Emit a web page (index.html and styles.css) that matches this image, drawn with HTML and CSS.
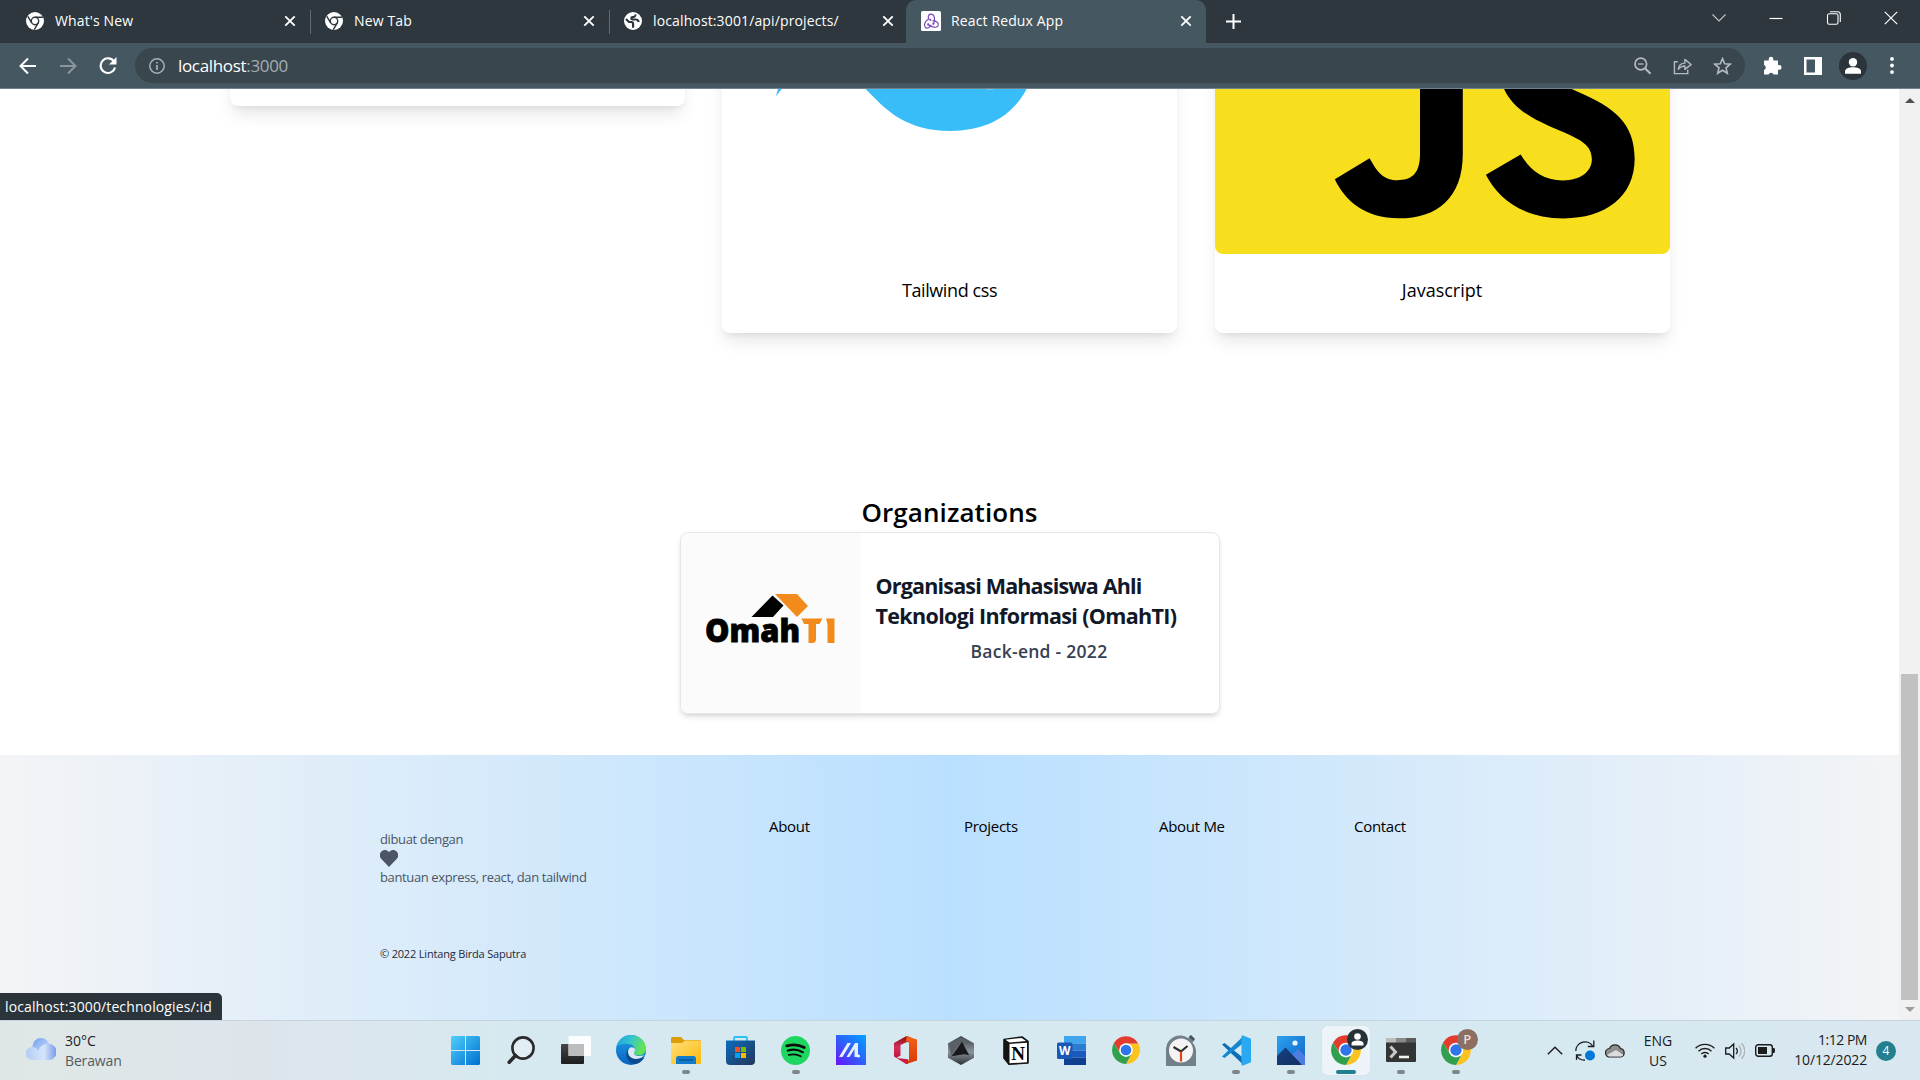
FILE: index.html
```html
<!DOCTYPE html>
<html lang="en">
<head>
<meta charset="utf-8">
<title>React Redux App</title>
<link rel="stylesheet" href="styles.css">
</head>
<body>
<svg class="defs" width="0" height="0" aria-hidden="true">
  <defs>
    <linearGradient id="gWin" x1="0" y1="0" x2="1" y2="1"><stop offset="0" stop-color="#4fd0fc"/><stop offset="1" stop-color="#006fd0"/></linearGradient>
    <linearGradient id="gCloud" x1="0" y1="0" x2="1" y2="1"><stop offset="0" stop-color="#6f9df0"/><stop offset="1" stop-color="#dceafb"/></linearGradient>
    <linearGradient id="gCloudB" x1="0" y1="0" x2="1" y2="0"><stop offset="0" stop-color="#b4cdf5"/><stop offset=".6" stop-color="#d5e4fa"/><stop offset="1" stop-color="#7499ea"/></linearGradient>
    <linearGradient id="gEdgeA" x1="0" y1="0" x2="1" y2=".3"><stop offset="0" stop-color="#1e9fe0"/><stop offset=".5" stop-color="#35c4cf"/><stop offset="1" stop-color="#62e455"/></linearGradient>
    <linearGradient id="gEdgeB" x1="0" y1="0" x2="0" y2="1"><stop offset="0" stop-color="#1ba0e4"/><stop offset="1" stop-color="#0a63c0"/></linearGradient>
    <linearGradient id="gFold" x1="0" y1="0" x2="1" y2="1"><stop offset="0" stop-color="#ffe07a"/><stop offset="1" stop-color="#fbb90c"/></linearGradient>
    <linearGradient id="gStore" x1="0" y1="0" x2="1" y2="1"><stop offset="0" stop-color="#0a6cbe"/><stop offset="1" stop-color="#243657"/></linearGradient>
    <linearGradient id="gAsus" x1="0" y1="1" x2="1" y2="0"><stop offset="0" stop-color="#6a12fb"/><stop offset=".5" stop-color="#2c62fb"/><stop offset="1" stop-color="#00a3ff"/></linearGradient>
    <linearGradient id="gOff" x1="0" y1="0" x2="0" y2="1"><stop offset="0" stop-color="#8c0c0c"/><stop offset=".5" stop-color="#d0305a"/><stop offset="1" stop-color="#c3123a"/></linearGradient>
    <linearGradient id="gOffR" x1="0" y1="0" x2="0" y2="1"><stop offset="0" stop-color="#f4611a"/><stop offset="1" stop-color="#d83a04"/></linearGradient>
    <linearGradient id="gArm" x1="0" y1="0" x2="0" y2="1"><stop offset="0" stop-color="#3d434a"/><stop offset=".55" stop-color="#8b939b"/><stop offset="1" stop-color="#2c3137"/></linearGradient>
    <linearGradient id="gPhoto" x1="0" y1="0" x2="1" y2="1"><stop offset="0" stop-color="#2aa2f0"/><stop offset="1" stop-color="#1463c4"/></linearGradient>
    <linearGradient id="gMount" x1="0" y1="0" x2="1" y2="1"><stop offset="0" stop-color="#173f80"/><stop offset="1" stop-color="#123063"/></linearGradient>
    <linearGradient id="gDark" x1="0" y1="0" x2="0" y2="1"><stop offset="0" stop-color="#454545"/><stop offset="1" stop-color="#1e1e1e"/></linearGradient>
    <symbol id="chromeMono" viewBox="0 0 18 18">
      <circle cx="9" cy="9" r="9" fill="#fff"/>
      <circle cx="9" cy="9" r="3.700" fill="none" stroke="#2d373d" stroke-width="1.400"/>
      <path d="M9 5.200h8M5.700 10.900 1.800 4.400M12.300 10.900 8.300 17.600" stroke="#2d373d" stroke-width="1.400"/>
    </symbol>
    <symbol id="close" viewBox="0 0 12 12"><path d="M1.300 1.300l9.400 9.400M10.700 1.300l-9.400 9.400" stroke="#fff" stroke-width="1.900"/></symbol>
    <symbol id="chrome" viewBox="0 0 28 28">
      <path d="M14 7.400h12.300A14 14 0 0 1 14 28l6-10.700z" fill="#fcc31e"/>
      <path d="M8.300 17.300 1.900 7A14 14 0 0 1 26.200 7.400H14z" fill="#e33b2e"/>
      <path d="M1.900 7l6.400 10.600L14 21l5.700-3.600L14 28A14 14 0 0 1 1.900 7z" fill="#30a04e"/>
      <circle cx="14" cy="14" r="6.800" fill="#fff"/><circle cx="14" cy="14" r="5.300" fill="#2f75ea"/>
    </symbol>
  </defs>
</svg>

<div class="window">
  <header class="tabstrip">
    <div class="tab"><svg class="favicon"><use href="#chromeMono"/></svg><span class="tab-title">What's New</span><svg class="tab-close"><use href="#close"/></svg></div>
    <div class="tab"><svg class="favicon"><use href="#chromeMono"/></svg><span class="tab-title">New Tab</span><svg class="tab-close"><use href="#close"/></svg></div>
    <div class="tab">
      <svg class="favicon" viewBox="0 0 18 18"><circle cx="9" cy="9" r="9" fill="#fff"/><path d="M11.500 2.500c-.2 2.300-.8 2.700-3 2.700-1.500 0-1.600 2.300 0 2.300h3c2 0 3 1 3 2.500M2 7l3 3h2.300c1.800 0 1.800 1 1.800 2.200v3.600" fill="none" stroke="#2d373d" stroke-width="2.200"/></svg>
      <span class="tab-title">localhost:3001/api/projects/</span><svg class="tab-close"><use href="#close"/></svg></div>
    <div class="tab tab-active">
      <svg class="favicon favicon-redux" viewBox="0 0 20 20"><rect width="20" height="20" rx="1.500" fill="#fff"/><g fill="none" stroke="#764abc" stroke-width="1.200"><path d="M12.600 12.600c1.600-3 1.300-9.400-2.600-9.400-3 0-3.400 3.400-1.900 5.600"/><path d="M7.200 8.200C4.400 9.800 2.200 14 4.200 16.200c2.200 2 4.800.2 6-2.400"/><path d="M7.400 13.800c3 2.400 8.800 3.800 9.800.6.800-2.800-2.400-4.800-5.800-4.800"/></g><g fill="#764abc"><circle cx="9.300" cy="8.800" r="1.100"/><circle cx="7.200" cy="13.400" r="1.100"/><circle cx="12.300" cy="12.800" r="1.100"/></g></svg>
      <span class="tab-title">React Redux App</span><svg class="tab-close"><use href="#close"/></svg></div>
    <svg class="new-tab" viewBox="0 0 15 15"><path d="M7.500 0v15M0 7.500h15" stroke="#fff" stroke-width="2"/></svg>
    <div class="win-controls">
      <svg viewBox="0 0 16 16"><path d="M1.500 4.500 8 11l6.500-6.500" fill="none" stroke="#c4c8ca" stroke-width="1.100"/></svg>
      <svg viewBox="0 0 16 16"><path d="M1.500 8.500h13" stroke="#fff" stroke-width="1.200"/></svg>
      <svg viewBox="0 0 16 16" fill="none" stroke="#fff" stroke-width="1.100"><rect x="1.500" y="3.800" width="10.500" height="10.500" rx="1.800"/><path d="M4 1.700h7.500a2.800 2.800 0 0 1 2.800 2.800V12"/></svg>
      <svg viewBox="0 0 16 16"><path d="M1.800 1.800l12.400 12.400M14.200 1.800 1.800 14.200" stroke="#fff" stroke-width="1.200"/></svg>
    </div>
  </header>

  <div class="toolbar">
    <div class="nav">
      <svg viewBox="0 0 18 18" fill="none" stroke="#fff" stroke-width="2"><path d="M17 9H2M9 1.500 1.500 9 9 16.500"/></svg>
      <svg viewBox="0 0 18 18" fill="none" stroke="#8c979d" stroke-width="2"><path d="M1 9h15M9 1.500 16.500 9 9 16.500"/></svg>
      <svg viewBox="0 0 18 18" fill="none" stroke="#fff" stroke-width="2.100"><path d="M15.300 5A7.300 7.300 0 1 0 16 10.500"/><path d="M17.500 0v7.500H10z" fill="#fff" stroke="none"/></svg>
    </div>
    <div class="omnibox">
      <svg class="info" viewBox="0 0 16 16" fill="none" stroke="#aab1b5" stroke-width="1.500"><circle cx="8" cy="8" r="7.200"/><path d="M8 7v5M8 4v1.600" stroke-width="1.700"/></svg>
      <span class="url">localhost<span class="port">:3000</span></span>
      <div class="omni-icons">
        <svg viewBox="0 0 18 18" fill="none" stroke="#b4babd" stroke-width="1.700"><circle cx="7.300" cy="7" r="5.800"/><path d="m11.500 11.300 5.500 5.500" stroke-width="2.200"/><path d="M4.500 7h5.600" stroke-width="1.300"/></svg>
        <svg viewBox="0 0 20 18" fill="none" stroke="#b4babd" stroke-width="1.500"><path d="M5 4.500H1.500V17h14v-4"/><path d="M5.500 12.500c.5-4.500 3-6.500 7-6.500V2l6.500 5.500-6.500 5v-3.500c-3 0-5 .8-7 3.500z" stroke-linejoin="round"/></svg>
        <svg viewBox="0 0 18 18" fill="none" stroke="#b4babd" stroke-width="1.600"><path d="m9 1.600 2.200 5.100 5.500.5-4.200 3.600 1.300 5.400L9 13.300l-4.800 2.900 1.300-5.400L1.300 7.200l5.500-.5z"/></svg>
      </div>
    </div>
    <div class="ext">
      <svg class="ext-puzzle" viewBox="0 0 18 18" fill="#fff"><path d="M1 4.200h4.400V3a2.200 2.200 0 1 1 4.400 0v1.200h4.400v4.400h1.200a2.200 2.200 0 1 1 0 4.400h-1.200v4.500H10a2.500 2.500 0 0 0-4.700 0H1v-4.200a2.500 2.500 0 0 0 0-4.700z"/></svg>
      <svg class="ext-panel" viewBox="0 0 18 18"><path d="M0 0h18v18H0z" fill="#fff"/><path d="M2.500 2.500h8.500v13H2.500z" fill="#455760"/></svg>
      <svg class="ext-user" viewBox="0 0 28 28"><circle cx="14" cy="14" r="14" fill="#2a343a"/><circle cx="14" cy="10.300" r="4.200" fill="#fff"/><path d="M6 21.800v-2.300c0-3 4-4.300 8-4.300s8 1.300 8 4.300v2.300z" fill="#fff"/></svg>
      <svg class="ext-menu" viewBox="0 0 4 18" fill="#fff"><circle cx="2" cy="2" r="2"/><circle cx="2" cy="9" r="2"/><circle cx="2" cy="16" r="2"/></svg>
    </div>
  </div>

  <div class="viewport">
    <main class="page">
      <section class="tech">
        <article class="card card-short"></article>
        <article class="card">
          <div class="card-img"><svg class="tailwind" viewBox="0 0 54 33"><path fill="#38bdf8" d="M27 0c-7.200 0-11.700 3.600-13.500 10.800 2.700-3.600 5.850-4.950 9.450-4.050 2.054.513 3.522 2.004 5.147 3.653C30.744 13.090 33.808 16.200 40.500 16.200c7.200 0 11.700-3.600 13.500-10.800-2.700 3.600-5.850 4.950-9.450 4.050-2.054-.513-3.522-2.004-5.147-3.653C36.756 3.110 33.692 0 27 0zM13.500 16.200C6.300 16.200 1.800 19.800 0 27c2.700-3.600 5.850-4.950 9.450-4.050 2.054.514 3.522 2.004 5.147 3.653C17.244 29.290 20.308 32.400 27 32.400c7.200 0 11.700-3.600 13.500-10.800-2.700 3.600-5.850 4.950-9.450 4.050-2.054-.513-3.522-2.004-5.147-3.653C23.256 19.310 20.192 16.200 13.500 16.200z"/></svg></div>
          <h3 class="card-name card-name-tight">Tailwind css</h3>
        </article>
        <article class="card">
          <div class="card-img card-img-js"><svg class="js" viewBox="0 0 630 630"><path d="m423.200 492.190c12.690 20.720 29.200 35.950 58.400 35.950 24.530 0 40.200-12.260 40.200-29.200 0-20.300-16.100-27.490-43.100-39.300l-14.800-6.350c-42.720-18.200-71.100-41-71.100-89.200 0-44.400 33.830-78.200 86.700-78.200 37.640 0 64.700 13.100 84.200 47.400l-46.100 29.600c-10.150-18.200-21.100-25.370-38.100-25.370-17.340 0-28.330 11-28.330 25.370 0 17.760 11 24.950 36.400 35.950l14.800 6.340c50.300 21.570 78.700 43.560 78.700 93 0 53.300-41.870 82.500-98.100 82.500-54.980 0-90.500-26.200-107.880-60.540zm-209.130 5.130c9.300 16.500 17.760 30.450 38.100 30.450 19.450 0 31.720-7.610 31.720-37.200v-201.300h59.200v202.100c0 61.300-35.940 89.200-88.400 89.200-47.400 0-74.850-24.530-88.810-54.075z"/></svg></div>
          <h3 class="card-name">Javascript</h3>
        </article>
      </section>

      <section class="orgs">
        <h2 class="orgs-title">Organizations</h2>
        <article class="org">
          <div class="org-logo">
            <svg class="omah" viewBox="0 0 130 54" width="130" height="54">
              <path d="M45.500 23 66.500 1.500l11 10L67 23z"/>
              <path d="M69 0h22l11 12L91 23z" fill="#f28a1c"/>
              <text class="omah-text" x="-1" y="48" textLength="95" lengthAdjust="spacingAndGlyphs">Omah</text>
              <path d="M95.500 24.500h21l-3 5.500h-3.500v15.500c0 2.500-1.500 3.500-4 3.500h-3.500V30H98zM120 24.500h8.500V49h-7V30z" fill="#f28a1c"/>
            </svg>
          </div>
          <div class="org-body">
            <h3><span class="line-one">Organisasi Mahasiswa Ahli</span><br>Teknologi Informasi (OmahTI)</h3>
            <p>Back-end - 2022</p>
          </div>
        </article>
      </section>

      <footer class="footer">
        <div class="made">
          <p>dibuat dengan</p>
          <svg viewBox="0 0 18 17" width="18" height="17"><path fill="#4b5563" d="M9 17 1.400 9A5.200 5.200 0 0 1 1.400 1.500a4.900 4.900 0 0 1 7.600.6 4.900 4.900 0 0 1 7.600-.6 5.200 5.200 0 0 1 0 7.500z"/></svg>
          <p>bantuan express, react, dan tailwind</p>
          <small>© 2022 Lintang Birda Saputra</small>
        </div>
        <nav class="links"><a>About</a><a>Projects</a><a>About Me</a><a>Contact</a></nav>
      </footer>
    </main>
    <div class="scrollbar">
      <svg viewBox="0 0 10 5"><path d="M0 5 5 0l5 5z" fill="#505050"/></svg>
      <div class="thumb"></div>
      <svg viewBox="0 0 10 5"><path d="M0 0l5 5 5-5z" fill="#9c9c9c"/></svg>
    </div>
    <div class="status">localhost:3000/technologies/:id</div>
  </div>

  <div class="taskbar">
    <div class="weather">
      <svg viewBox="0 0 30 24" width="30" height="24"><circle cx="15" cy="9.500" r="8.500" fill="url(#gCloud)"/><path d="M6 23a6.500 6.500 0 0 1 0-13c3 0 5 1.500 6 4 1-3 4-7 9-7a8 8 0 0 1 3 16z" fill="url(#gCloudB)"/></svg>
      <div class="weather-text"><span class="temp">30°C</span><span class="sky">Berawan</span></div>
    </div>
    <div class="apps">
      <div class="app"><svg width="29" height="29" viewBox="0 0 29 29"><path fill="url(#gWin)" d="M1.500 0H14v14H0V1.500A1.500 1.500 0 0 1 1.500 0zM15 0h12.500A1.500 1.500 0 0 1 29 1.500V14H15zM0 15h14v14H1.500A1.500 1.500 0 0 1 0 27.500zM15 15h14v12.500a1.500 1.500 0 0 1-1.500 1.500H15z"/></svg></div>
      <div class="app"><svg width="28" height="28" viewBox="0 0 28 28" fill="none" stroke="#2b2b2b"><circle cx="16" cy="12" r="10.600" stroke-width="2.600" fill="#e2eef3"/><path d="m8.500 19.500-6.300 6.800" stroke-width="3.600" stroke-linecap="round"/></svg></div>
      <div class="app"><svg width="30" height="28" viewBox="0 0 30 28"><rect y="8" width="23" height="20" rx="1" fill="url(#gDark)"/><rect x="7.500" width="22.500" height="20" rx="1" fill="#fff" fill-opacity=".9"/><path d="M7.500 8H23v12H7.500z" fill="#bdbdbd"/></svg></div>
      <div class="app"><svg width="30" height="30" viewBox="0 0 30 30"><circle cx="15" cy="15" r="15" fill="url(#gEdgeB)"/><path d="M.6 11C2.500 4.500 8 0 15 0c8 0 15 6 15 13.500 0 4-3 7-7 7-3.500 0-5-1.300-5-2.500 0-.8 1-1.200 1-3.500 0-3-3-5.800-7.500-5.800C6 8.700 1.800 10 .6 11z" fill="url(#gEdgeA)"/><path d="M11.500 15c-3.500 5 .5 14.500 8.500 14 4-1 7-4 8.300-6.500-4 2-9 2-12-.5-3-2.200-3-5.500-1.500-8.500-1.300 0-2.600.7-3.300 1.500z" fill="#0c4a8f"/><path d="M14.500 12.500c-4 2-3 8.500 1.500 10.500 4.500 2 10 .5 13-3.500-2 1.200-4 1.400-6 1.400-3.500 0-5-1.300-5-2.900 0-.8 1-1.200 1-3.500 0-1.500-2.500-3-4.500-2z" fill="#dbeaf2"/></svg></div>
      <div class="app running"><svg width="30" height="27" viewBox="0 0 30 27"><path d="M0 9V1.500A1.500 1.500 0 0 1 1.500 0H10l3 3h15.500A1.500 1.500 0 0 1 30 4.500V9z" fill="#dd9c09"/><path d="M0 6h11l3-2.500h14.500A1.500 1.500 0 0 1 30 5v20.500a1.500 1.500 0 0 1-1.500 1.500h-27A1.500 1.500 0 0 1 0 25.500z" fill="url(#gFold)"/><path d="M5 27v-5.500a2.500 2.500 0 0 1 2.500-2.500h15a2.500 2.500 0 0 1 2.500 2.500V27z" fill="#117ccb"/><path d="M8 23h14" stroke="#0a4d8c" stroke-width="1.200"/></svg></div>
      <div class="app"><svg width="29" height="29" viewBox="0 0 29 29"><path d="M8 6V2a1 1 0 0 1 1-1h11a1 1 0 0 1 1 1v4" fill="none" stroke="#2cc0f4" stroke-width="1.800"/><path d="M0 4.500h29V25a4 4 0 0 1-4 4H4a4 4 0 0 1-4-4z" fill="url(#gStore)"/><path d="M9 11h5v5H9z" fill="#f25022"/><path d="M15 11h5v5h-5z" fill="#7fba00"/><path d="M9 17h5v5H9z" fill="#00a4ef"/><path d="M15 17h5v5h-5z" fill="#ffb900"/></svg></div>
      <div class="app running"><svg width="29" height="29" viewBox="0 0 29 29"><circle cx="14.500" cy="14.500" r="14.500" fill="#1ed760"/><g fill="none" stroke="#0b0f0c" stroke-linecap="round"><path d="M5.800 9.900c6-1.700 12.600-1.200 17.500 1.600" stroke-width="2.700"/><path d="M6.800 14.600c5-1.500 10.600-.9 15 1.600" stroke-width="2.200"/><path d="M7.800 18.900c4.200-1.100 8.400-.7 12 1.400" stroke-width="1.800"/></g></svg></div>
      <div class="app"><svg width="30" height="30" viewBox="0 0 30 30"><path d="M0 0h30v30H0z" fill="url(#gAsus)"/><path d="M3 22 11.500 8H15L6.500 22zM10.500 22 19 8h3v14h-3.500v-8L13.500 22z" fill="#e9eeff"/><circle cx="22.500" cy="21" r="1.500" fill="#fff"/></svg></div>
      <div class="app"><svg width="23" height="28" viewBox="0 0 23 28"><path d="M0 7 12.500 0 17 1.500V7l-4-1-6.500 3v10.500L2.500 22 0 20.500z" fill="url(#gOff)"/><path d="M2.500 22 14 23.200V28h-2z" fill="#d2183c"/><path d="M12.500 0 23 3.500v21L12.500 28 15 23.200V6l-3-.8z" fill="url(#gOffR)"/></svg></div>
      <div class="app"><svg width="26" height="29" viewBox="0 0 27 30"><path d="M13.500 0 27 7.500v15L13.500 30 0 22.500v-15z" fill="url(#gArm)"/><path d="M13.500 1.500 26 8.500 16 8 3 20 1 8z" fill="#5a6067"/><path d="M14.500 6 22 20l-5-1-13.500 2z" fill="#17191c"/><path d="M14.500 6 3.500 21l5-8z" fill="#7d858c"/></svg></div>
      <div class="app"><svg width="26" height="29" viewBox="0 0 26 29"><path d="M1 3.500 19 1l6 4.500V27L6 28.200 1 22z" fill="#151515" stroke="#151515" stroke-width="1.600" stroke-linejoin="round"/><path d="M2.500 3.800 18.600 1.900l4.500 3.200L6.500 6.500z" fill="#fff"/><path d="M6.500 8 24 6.700v19.600L6.500 27.300z" fill="#fff"/><text class="notion" x="8.300" y="23.500" textLength="14">N</text></svg></div>
      <div class="app"><svg width="29" height="29" viewBox="0 0 29 29"><path d="M7 0h22v7.500H7z" fill="#41a5ee"/><path d="M7 7.500h22v7H7z" fill="#2b7cd3"/><path d="M7 14.500h22v7H7z" fill="#185abd"/><path d="M7 21.500h22V29H7z" fill="#103f91"/><rect y="6.500" width="15.500" height="16.500" rx="1.500" fill="#1a58b8"/><text class="word" x="1.900" y="18.800" textLength="11.500" lengthAdjust="spacingAndGlyphs">W</text></svg></div>
      <div class="app"><svg width="28" height="28"><use href="#chrome"/></svg></div>
      <div class="app"><svg width="30" height="31" viewBox="0 0 30 31"><path d="M0 31V13a14 14 0 0 1 22-10l2.500-2 4 4-2 2.500A14 14 0 0 1 30 15v16z" fill="#72808a"/><path d="m23 1.500 2-1.500 4 4-1.500 1.800z" fill="#444d54"/><circle cx="15" cy="15.500" r="12" fill="#f4f4f4"/><path d="m7.500 12 7.500 4.500L21.500 11" fill="none" stroke="#2d2d2d" stroke-width="2.200"/><path d="M15 16.500v10" stroke="#e04516" stroke-width="2.200"/></svg></div>
      <div class="app running"><svg width="30" height="31" viewBox="0 0 30 31"><path d="M1 9.500 3.500 8l19 15v7z" fill="#0a6fb8"/><path d="M1 21.500 3.500 23l19-15V1z" fill="#1287d2"/><path d="M21.500.3 30 3.800v23.400l-8.500 3.500-1-.7V22.500V1z" fill="#28a9f1"/></svg></div>
      <div class="app running"><svg width="28" height="29" viewBox="0 0 28 29"><path d="M0 0h28v29H0z" fill="url(#gPhoto)"/><path d="M14 20 21 13l7 7v9H18z" fill="#4d7de0"/><path d="M0 20 8.500 11.500 25 29H0z" fill="url(#gMount)"/><circle cx="18" cy="7" r="2.600" fill="#eaf6ff"/></svg></div>
      <div class="app running current"><svg width="30" height="30"><use href="#chrome"/></svg><svg class="badge" viewBox="0 0 21 21"><circle cx="10.500" cy="10.500" r="10.500" fill="#263238"/><circle cx="10.500" cy="7.500" r="3.300" fill="#fff"/><path d="M4.500 16.500v-1.500c0-2.400 3-3.400 6-3.400s6 1 6 3.400v1.500z" fill="#fff"/></svg></div>
      <div class="app running"><svg width="30" height="24" viewBox="0 0 30 24"><rect width="30" height="24" rx="1" fill="#343434"/><path d="M0 4.500V1a1 1 0 0 1 1-1h9v4.500z" fill="#bdbdbd"/><path d="M10 0h10v4.500H10z" fill="#8a8a8a"/><path d="M20 0h9a1 1 0 0 1 1 1v3.500H20z" fill="#5c5c5c"/><path d="m4.500 8.500 5 5.500-5 5.500" fill="none" stroke="#c9c9c9" stroke-width="3"/><path d="M13 19h10" stroke="#f1f1f1" stroke-width="2.600"/></svg></div>
      <div class="app running"><svg width="30" height="30"><use href="#chrome"/></svg><span class="badge badge-p">P</span></div>
    </div>
    <div class="tray">
      <svg class="tray-chev" viewBox="0 0 16 9"><path d="m.8 8.200 7.200-7 7.200 7" fill="none" stroke="#1c1c1c" stroke-width="1.400"/></svg>
      <svg class="tray-sync" viewBox="0 0 20 21" fill="none" stroke="#1c1c1c" stroke-width="1.300"><path d="M.8 11A9.200 9.200 0 0 1 18 6.500M18.800.5v6h-6M1.500 20v-5h5M1.500 15.500A9 9 0 0 0 10 20"/><circle cx="15" cy="15.500" r="5" fill="#0078d7" stroke="none"/></svg>
      <svg class="tray-cloud" viewBox="0 0 20 15"><path d="M5 14A4.200 4.200 0 0 1 4.500 5.500 6 6 0 0 1 15.500 5.500 4.300 4.300 0 0 1 15.500 14z" fill="#8d8d8d" stroke="#222" stroke-width="1.200"/><path d="m2 12 9-5 7.500 5-2 1.500H4z" fill="#dcdcdc"/></svg>
      <div class="lang"><span>ENG</span><span>US</span></div>
      <svg class="tray-wifi" viewBox="0 0 20 15" fill="none" stroke="#1c1c1c" stroke-width="1.400"><path d="M.6 5.300a13.300 13.300 0 0 1 18.800 0M3.500 8.200a9.200 9.200 0 0 1 13 0M6.300 11a5.200 5.200 0 0 1 7.400 0"/><circle cx="10" cy="13.200" r="1.600" fill="#1c1c1c" stroke="none"/></svg>
      <svg class="tray-vol" viewBox="0 0 20 18" fill="none" stroke="#1c1c1c" stroke-width="1.300"><path d="M.7 6h3.500l4.500-4v14L4.200 12H.7zM11 6a4 4 0 0 1 0 6"/><path d="M13.800 3.500a8 8 0 0 1 0 11M16.500 1.200a11 11 0 0 1 0 15.600" stroke="#a8b3b8"/></svg>
      <svg class="tray-bat" viewBox="0 0 20 13"><rect x=".7" y=".7" width="16.600" height="11.600" rx="2.500" fill="none" stroke="#1c1c1c" stroke-width="1.400"/><rect x="3" y="3" width="9" height="7" fill="#1c1c1c"/><path d="M17.500 4h1.200a1.200 1.200 0 0 1 1.200 1.200v2.600A1.200 1.200 0 0 1 18.700 9h-1.200z" fill="#1c1c1c"/></svg>
      <div class="clock"><span class="time">1:12 PM</span><span class="date">10/12/2022</span></div>
      <span class="count">4</span>
    </div>
  </div>
</div>
</body>
</html>
```
FILE: styles.css
```css
* { box-sizing: border-box; margin: 0; padding: 0; }
body { width: 1920px; height: 1080px; overflow: hidden; font-family: "Open Sans", "Noto Sans", sans-serif; background: #fff; color: #000; }
svg { display: block; flex: none; }
.defs { position: absolute; }
.window { display: flex; flex-direction: column; height: 1080px; white-space: nowrap; }

/* Tab strip */
.tabstrip { display: flex; height: 43px; background: #2d373d; padding-left: 12px; }
.tab { display: flex; align-items: center; width: 299px; padding: 0 14px 1px; color: #fff; font-size: 14px; letter-spacing: .13px; position: relative; }
.tab:nth-child(-n+2)::after { content: ""; position: absolute; right: 0; top: 10px; width: 1px; height: 24px; background: #606b71; }
.tab-active { background: #455760; border-radius: 10px 10px 0 0; margin-left: -3px; width: 300px; padding-left: 15px; padding-right: 13px; }
.favicon { width: 18px; height: 18px; }
.favicon-redux { width: 20px; height: 20px; }
.tab-title { flex: 1; padding-left: 11px; line-height: 20px; }
.tab-active .tab-title { padding-left: 10px; }
.tab-close { width: 12px; height: 12px; margin-right: 1px; }
.new-tab { width: 15px; height: 15px; margin: 14px 0 0 20px; }
.win-controls { display: flex; gap: 41.5px; margin-left: auto; padding: 10px 21px 0 0; }
.win-controls svg { width: 16px; height: 16px; }

/* Address bar */
.toolbar { display: flex; align-items: center; height: 46px; background: #455760; border-bottom: 1px solid #71828c; }
.nav { display: flex; gap: 22px; padding-left: 19px; width: 135px; flex: none; }
.nav svg { width: 18px; height: 18px; }
.omnibox { display: flex; align-items: center; width: 1610px; height: 35px; border-radius: 18px; background: #39464d; padding: 0 13px 0 14px; }
.info { width: 16px; height: 16px; }
.url { flex: 1; padding-left: 13px; color: #fff; font-size: 17px; line-height: 24px; letter-spacing: -.33px; }
.port { color: #a5adb1; }
.omni-icons { display: flex; gap: 21px; }
.omni-icons svg { width: 19px; height: 18px; }
.ext { display: flex; align-items: center; padding-left: 18px; }
.ext-puzzle { width: 19px; height: 19px; }
.ext-panel { width: 18px; height: 18px; margin-left: 22px; }
.ext-user { width: 28px; height: 28px; margin-left: 17px; }
.ext-menu { width: 4px; height: 17px; margin-left: 23px; }

/* Page */
.viewport { display: flex; height: 931px; overflow: hidden; position: relative; }
.page { flex: 1; display: flex; flex-direction: column; align-items: center; overflow: hidden; background: #fff; }
.tech { display: flex; align-items: flex-start; gap: 37.5px; width: 1440px; height: 244px; }
.card { width: 455px; height: 534px; margin-top: -290px; border-radius: 8px; background: #fff; box-shadow: 0 11px 17px -3px rgba(0,0,0,.1), 0 4px 7px -4px rgba(0,0,0,.1); }
.card-short { height: 307px; }
.card-img { display: flex; align-items: center; justify-content: center; height: 455px; border-radius: 8px; }
.card-img-js { background: #f7df1e; }
.tailwind { width: 348px; height: 213px; margin-top: 4px; }
.js { width: 455px; height: 455px; }
.card-name { text-align: center; font-weight: 400; font-size: 18px; line-height: 28px; padding-top: 22px; }
.card-name-tight { letter-spacing: -.4px; }

.orgs { display: flex; flex-direction: column; align-items: center; margin-top: 160px; }
.orgs-title { font-size: 26px; font-weight: 600; line-height: 36px; padding-top: 1px; padding-bottom: 2px; letter-spacing: .08px; }
.org { display: flex; width: 540px; height: 182px; border: 1px solid #e3e6eb; border-radius: 8px; overflow: hidden; box-shadow: 0 4px 6px -1px rgba(0,0,0,.1), 0 2px 4px -2px rgba(0,0,0,.15); }
.org-logo { display: flex; align-items: center; justify-content: center; width: 180px; background: #fbfbfb; padding: 0 0 5px; }
.omah { overflow: visible; }
.omah-text { font: 800 31px "Open Sans", sans-serif; stroke: #000; stroke-width: .8; }
.org-body { padding: 38px 0 0 15px; }
.org-body h3 { font-size: 21.5px; font-weight: 700; line-height: 30px; color: #111827; letter-spacing: -.65px; }
.line-one { letter-spacing: -.82px; }
.org-body p { padding: 7px 0 0 95px; font-size: 17.5px; line-height: 26px; font-weight: 600; color: #374151; letter-spacing: .27px; }

.footer { display: flex; width: 100%; height: 265px; margin-top: 41px; padding: 60px 0 0 380px; background: linear-gradient(90deg, #f3f4f6, #bae0ff 50%, #f3f4f6); }
.made { width: 389px; padding-top: 14px; color: #4b5563; font-size: 13px; line-height: 20px; letter-spacing: -.37px; }
.made svg { margin: 1px 0 0; }
.made small { display: block; margin-top: 58px; font-size: 11px; line-height: 18px; color: #1f2937; letter-spacing: -.18px; }
.links { display: grid; grid-template-columns: repeat(4, 195px); font-size: 15px; line-height: 22px; letter-spacing: -.29px; }

.scrollbar { display: flex; flex-direction: column; align-items: center; width: 21px; background: #f1f1f1; padding: 9px 0 0; }
.scrollbar svg { width: 10px; height: 5px; }
.thumb { width: 17px; height: 326px; margin: 571px 0 7px; background: #c1c1c1; }
.status { position: absolute; left: 0; bottom: 0; width: 222px; height: 27px; padding-left: 5px; background: #2a343a; border-radius: 0 5px 0 0; color: #fff; font-size: 14px; line-height: 28px; letter-spacing: .12px; }

/* Taskbar */
.taskbar { display: flex; height: 60px; border-top: 1px solid #c6d5df; background: linear-gradient(90deg, #dfe7e6, #dde5ec 14%, #d7e9f0 27%, #d7e9f0 85%, #d9e7f0); }
.weather { display: flex; gap: 9px; width: 438px; padding: 16px 0 0 26px; font-size: 14px; }
.weather-text { display: flex; flex-direction: column; margin-top: -6px; line-height: 20px; }
.temp { color: #1c1c1c; }
.sky { color: #555c60; letter-spacing: -.15px; }
.apps { display: flex; }
.app { position: relative; display: flex; align-items: center; justify-content: center; width: 55.06px; height: 58px; }
.running::after { content: ""; position: absolute; left: calc(50% - 4px); bottom: 5px; width: 8px; height: 4px; border-radius: 2px; background: #7f868a; }
.current::before { content: ""; position: absolute; left: 3.5px; top: 5px; width: 48px; height: 49px; border-radius: 5px; background: #edf4f9; box-shadow: 0 0 1px #b5c2c9; }
.current svg { position: relative; }
.current::after { left: calc(50% - 10px); width: 20px; background: #24808f; }
.badge, .current .badge { position: absolute; left: 28px; top: 8px; width: 21px; height: 21px; }
.badge-p { border-radius: 50%; background: #8d6e63; color: #e9dfdb; font-size: 13px; font-weight: 600; line-height: 20px; text-align: center; }
.notion { font: 700 19px "Liberation Serif", serif; }
.word { font: 700 12px "Open Sans", sans-serif; fill: #fff; }

.tray { display: flex; align-items: center; margin-left: auto; padding-right: 24px; color: #1c1c1c; font-size: 14px; }
.tray-chev { width: 16px; height: 9px; margin-right: 12px; }
.tray-sync { width: 20px; height: 21px; margin-right: 10px; }
.tray-cloud { width: 20px; height: 15px; margin-right: 18px; }
.lang { display: flex; flex-direction: column; align-items: center; width: 30px; line-height: 20px; margin-right: 22px; }
.tray-wifi { width: 20px; height: 15px; margin-right: 10px; }
.tray-vol { width: 20px; height: 18px; margin-right: 10px; }
.tray-bat { width: 20px; height: 13px; margin-right: 18px; }
.clock { display: flex; flex-direction: column; align-items: flex-end; width: 74px; line-height: 20px; margin-right: 9px; padding-bottom: 1px; }
.time { letter-spacing: -.47px; }
.date { letter-spacing: -.15px; }
.count { width: 20px; height: 20px; border-radius: 50%; background: #24808f; color: #fff; font-size: 12px; line-height: 20px; text-align: center; }
```
